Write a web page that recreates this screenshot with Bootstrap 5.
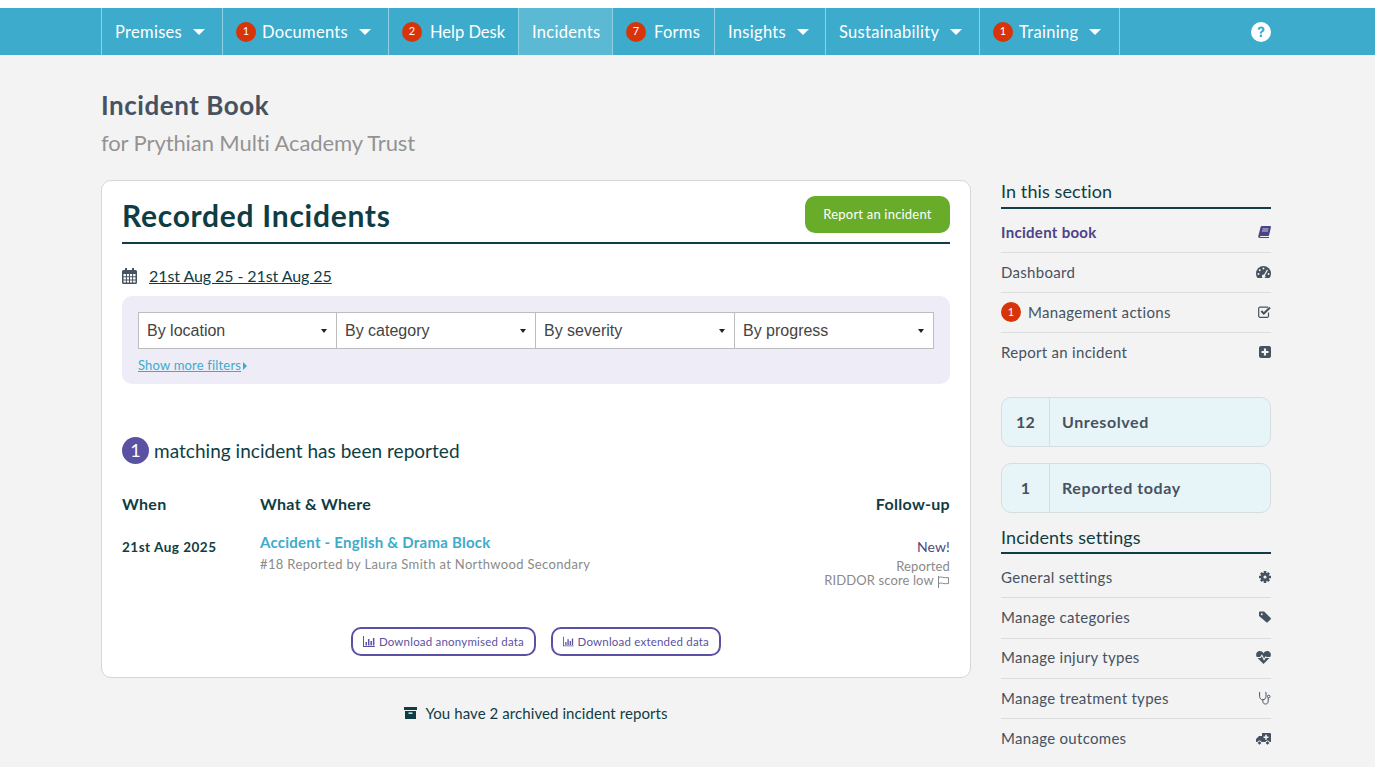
<!DOCTYPE html>
<html lang="en">
<head>
<meta charset="utf-8">
<title>Incident Book</title>
<link href="https://cdn.jsdelivr.net/npm/bootstrap@5.3.0/dist/css/bootstrap.min.css" rel="stylesheet">
<style>
html,body{overflow:hidden;height:767px}
body{background:#f3f3f3;font-family:"Lato","Noto Sans",sans-serif;color:#0f3d44;padding-top:8px;border-top:0}
.topline{position:absolute;left:0;right:0;top:0;height:8px;background:#fff}
.topbar{background:#3dabcb;height:47px;padding-left:101px;padding-right:104px;border-bottom:0}
.topitem{height:47px;padding:2px 0 0 13px;color:#fff;font-size:16.5px;letter-spacing:.3px;border-right:1px solid #8fd0e2;text-decoration:none;gap:6px;flex:none}
.topitem:first-child{border-left:1px solid #8fd0e2;width:122px}
.topitem:nth-child(2){width:166px}
.topitem:nth-child(3){width:130px;gap:8px;letter-spacing:0}
.topitem:nth-child(4){width:94px}
.topitem:nth-child(5){width:102px;gap:8px}
.topitem:nth-child(6){width:111px}
.topitem:nth-child(7){width:154px}
.topitem:nth-child(8){width:140px}
.topitem.on{background:#5cb9d4}
.tcaret{width:0;height:0;border-left:6px solid transparent;border-right:6px solid transparent;border-top:6px solid #fff;margin:-2px 0 0 5px}
.redcount{width:20px;height:20px;border-radius:50%;background:#d8340a;color:#fff;font-size:11px;letter-spacing:0;display:inline-flex;align-items:center;justify-content:center;flex:none}
.topitem .redcount{margin-top:-2px}
.helpdot{margin-left:auto}
.pagehead{padding:35px 0 0 101px;height:125px}
.booktitle{font-size:26px;font-weight:700;color:#465260;line-height:31px;margin:0;letter-spacing:.55px}
.booksub{font-size:22px;color:#939393;line-height:30px;margin:7px 0 0;letter-spacing:-.1px}
.layout{padding-left:101px;width:1271px;gap:30px}
.maincol{width:870px;flex:none}
.sidecol{width:270px;flex:none}
.incard{background:#fff;border:1px solid #d6d6d6;border-radius:10px;height:498px;padding:15px 20px 0}
.cardhead{height:48px;border-bottom:2px solid #0f3d44}
.cardtitle{font-size:30px;font-weight:700;color:#0f3d44;margin:0;line-height:38px;letter-spacing:.72px}
.greenbtn{background:#68ac2a;color:#fff;border:0;border-radius:10px;font-size:13px;height:37px;width:145px;padding:0;letter-spacing:.2px}
.daterow{margin-top:21px;height:22px;gap:12px;font-size:16px;line-height:22px;letter-spacing:-.08px}
.daterow a{color:#0f3d44}
.filterbox{background:#edecf7;border-radius:10px;margin-top:9px;height:88px;padding:16px}
.filterbar{height:37px;background:#fff;border-top:1px solid #bdbdbd;border-bottom:1px solid #bdbdbd}
.filtercell{flex:0 0 25%;font-family:"Liberation Sans",Arial,sans-serif;color:#444;font-size:16px;padding:0 8px;border-right:1px solid #bdbdbd}
.filtercell:first-child{border-left:1px solid #bdbdbd}
.minicaret{width:0;height:0;border-left:3px solid transparent;border-right:3px solid transparent;border-top:4px solid #222;margin-right:1px}
.morefilters{font-size:13px;color:#3dabcb;margin-top:8px;line-height:16px;letter-spacing:.18px}
.morefilters a{color:#3dabcb}
.rightcaret{display:inline-block;width:0;height:0;border-top:4px solid transparent;border-bottom:4px solid transparent;border-left:4px solid #3dabcb;margin-left:2px}
.matchline{margin-top:53px;font-size:19px;line-height:27px;gap:5px;letter-spacing:.03px}
.purplecount{width:27px;height:27px;border-radius:50%;background:#5b51a2;color:#fff;font-size:18px;display:inline-flex;align-items:center;justify-content:center;letter-spacing:0}
.colheads{margin-top:30px;font-size:16px;font-weight:700;line-height:20px;letter-spacing:.3px}
.whencol{width:138px;flex:none}
.rowdata{margin-top:13px;height:76px}
.whendata{font-size:13.5px;font-weight:700;padding-top:11px;line-height:18px;letter-spacing:.5px}
.inclink{color:#3dabcb;font-weight:700;font-size:15px;line-height:20px;text-decoration:none;letter-spacing:.24px;display:block;margin-top:5px}
.incmeta{color:#8a8a8a;font-size:13px;line-height:18px;margin-top:3px;letter-spacing:.35px}
.followcol{margin-left:auto;text-align:right;color:#8a8a8a;font-size:13px;line-height:14px;letter-spacing:.12px}
.newtag{color:#4d4a7e;font-size:14px;line-height:20px;margin-top:10px;margin-bottom:2px;display:block}
.dlrow{gap:15px;margin-top:24px}
.dlbtn{border:2px solid #5b51a2;border-radius:10px;background:#fff;color:#5b51a2;font-size:11.5px;height:29px;padding:0 10px;gap:4px;letter-spacing:.2px;white-space:nowrap}
.dlbtn.dlwide{width:185px}
.dlbtn.dlnarrow{width:170px}
.archline{height:70px;gap:8px;font-size:15px;letter-spacing:.08px;color:#0f3d44}
.sidehead{font-size:18px;line-height:22px;color:#0f3d44;border-bottom:2px solid #0f3d44;height:29px;letter-spacing:.1px;margin-bottom:4px}
.sideitem{height:40px;padding-bottom:1.5px;border-bottom:1px solid #dcdcdc;font-size:15px;color:#465260;letter-spacing:.3px;text-decoration:none}
.settingslist .sideitem{height:40.3px}
.sideitem.last{border-bottom:0}
.sideitem.cur{font-weight:700;color:#4b4486}
.sideicon{margin-left:auto;flex:none}
.sidered{width:20px;height:20px;font-size:11px;margin-right:7px}
.statbox{background:#e8f5f8;border:1px solid #d6dedf;border-radius:10px;height:50px;font-size:16px;font-weight:700;color:#465260;letter-spacing:.6px}
.statbox.firststat{margin-top:24px}
.statbox.nextstat{margin-top:16px}
.settingshead{margin-top:12px;line-height:24px}
.statnum{width:48px;border-right:1px solid #d6dedf;text-align:center;flex:none;line-height:48px;letter-spacing:.2px}
.statlabel{padding-left:12px;line-height:48px}
</style>
</head>
<body>
<div class="topline"></div>
<nav class="topbar d-flex align-items-center">
 <a class="topitem d-flex align-items-center" href="#">Premises<span class="tcaret"></span></a>
 <a class="topitem d-flex align-items-center" href="#"><span class="redcount">1</span>Documents<span class="tcaret"></span></a>
 <a class="topitem d-flex align-items-center" href="#"><span class="redcount">2</span>Help Desk</a>
 <a class="topitem on d-flex align-items-center" href="#">Incidents</a>
 <a class="topitem d-flex align-items-center" href="#"><span class="redcount">7</span>Forms</a>
 <a class="topitem d-flex align-items-center" href="#">Insights<span class="tcaret"></span></a>
 <a class="topitem d-flex align-items-center" href="#">Sustainability<span class="tcaret"></span></a>
 <a class="topitem d-flex align-items-center" href="#"><span class="redcount">1</span>Training<span class="tcaret"></span></a>
 <a class="helpdot d-flex" href="#" aria-label="Help">
  <svg width="20" height="20" viewBox="0 0 20 20"><circle cx="10" cy="10" r="10" fill="#fff"/><path d="M6.600 7.600C6.800 5.600 8.200 4.600 10.100 4.600c2 0 3.400 1.200 3.400 2.900 0 1.400-.8 2-1.700 2.600-.7.500-.9.800-.9 1.500H8.800c0-1.300.4-2 1.300-2.600.8-.5 1.200-.8 1.200-1.400 0-.6-.5-1-1.200-1-.8 0-1.300.4-1.400 1.200z" fill="#3dabcb"/><rect x="8.800" y="12.600" width="2.200" height="2.400" rx=".5" fill="#3dabcb"/></svg>
 </a>
</nav>
<header class="pagehead">
 <h1 class="booktitle">Incident Book</h1>
 <p class="booksub">for Prythian Multi Academy Trust</p>
</header>
<div class="layout d-flex align-items-start">
 <main class="maincol">
  <section class="incard">
   <div class="cardhead d-flex justify-content-between align-items-start">
    <h2 class="cardtitle">Recorded Incidents</h2>
    <button class="greenbtn" type="button">Report an incident</button>
   </div>
   <div class="daterow d-flex align-items-center">
    <svg width="15" height="16" viewBox="0 0 15 16"><path fill="#465260" d="M3 0h2v2h5V0h2v2h1.500A1.500 1.500 0 0 1 15 3.500v11a1.500 1.500 0 0 1-1.500 1.500h-12A1.500 1.500 0 0 1 0 14.500v-11A1.500 1.500 0 0 1 1.500 2H3z"/><path fill="#fff" d="M1.500 6h2.400v2.200H1.500zm3.400 0h2.100v2.200H4.900zm3.100 0h2.100v2.200H8zm3.100 0h2.400v2.200h-2.400zM1.500 9.200h2.400v2.200H1.500zm3.400 0h2.100v2.200H4.900zm3.100 0h2.100v2.200H8zm3.100 0h2.400v2.200h-2.400zM1.500 12.400h2.400v2.100H1.500zm3.400 0h2.100v2.100H4.900zm3.100 0h2.100v2.100H8zm3.100 0h2.400v2.100h-2.400z"/></svg>
    <a href="#">21st Aug 25 - 21st Aug 25</a>
   </div>
   <div class="filterbox">
    <div class="filterbar d-flex">
     <div class="filtercell d-flex align-items-center justify-content-between">By location<span class="minicaret"></span></div>
     <div class="filtercell d-flex align-items-center justify-content-between">By category<span class="minicaret"></span></div>
     <div class="filtercell d-flex align-items-center justify-content-between">By severity<span class="minicaret"></span></div>
     <div class="filtercell d-flex align-items-center justify-content-between">By progress<span class="minicaret"></span></div>
    </div>
    <div class="morefilters"><a href="#">Show more filters</a><span class="rightcaret"></span></div>
   </div>
   <div class="matchline d-flex align-items-center"><span class="purplecount">1</span>matching incident has been reported</div>
   <div class="colheads d-flex"><div class="whencol">When</div><div>What &amp; Where</div><div class="ms-auto">Follow-up</div></div>
   <div class="rowdata d-flex">
    <div class="whencol whendata">21st Aug 2025</div>
    <div><a class="inclink" href="#">Accident - English &amp; Drama Block</a><div class="incmeta">#18 Reported by Laura Smith at Northwood Secondary</div></div>
    <div class="followcol"><span class="newtag">New!</span>Reported<br>RIDDOR score low <svg width="13" height="12" viewBox="0 0 13 12"><path fill="none" stroke="#8a8a8a" d="M1.500 0v12M1.500 1.500c3-1.500 5 1 10 0v6c-5 1-7-1.500-10 0"/></svg></div>
   </div>
   <div class="dlrow d-flex justify-content-center">
    <button class="dlbtn dlwide d-flex align-items-center" type="button"><svg width="12" height="11" viewBox="0 0 12 11"><path fill="#5b51a2" d="M0 0h1v10h11v1H0zM2.500 6h1.500v3.500H2.500zM5 3h1.500v6.500H5zM7.500 5H9v4.500H7.500zM10 2h1.500v7.500H10z"/></svg>Download anonymised data</button>
    <button class="dlbtn dlnarrow d-flex align-items-center" type="button"><svg width="12" height="11" viewBox="0 0 12 11"><path fill="#5b51a2" d="M0 0h1v10h11v1H0zM2.500 6h1.500v3.500H2.500zM5 3h1.500v6.500H5zM7.500 5H9v4.500H7.500zM10 2h1.500v7.500H10z"/></svg>Download extended data</button>
   </div>
  </section>
  <div class="archline d-flex align-items-center justify-content-center">
   <svg width="13" height="12" viewBox="0 0 13 12"><path fill="#0f3d44" d="M0 0h13v3H0zM1 4h11v8H1z"/><rect x="4.500" y="5.500" width="4" height="1.300" fill="#fff"/></svg>
   <span>You have 2 archived incident reports</span>
  </div>
 </main>
 <aside class="sidecol">
  <div class="sidehead">In this section</div>
  <a class="sideitem cur d-flex align-items-center" href="#">Incident book<svg class="sideicon" width="13" height="12" viewBox="0 0 13 12"><path fill="#4b4486" d="M4 0h8a1 1 0 0 1 1 1l-2 8.500a1 1 0 0 1-.7.500H2.500c-.8 0-.8 1 0 1H11v1H2C.5 12 0 11 .3 10L2.600 1A1.500 1.500 0 0 1 4 0z"/><path stroke="#edecf7" stroke-width=".8" d="M4.500 3h6M4 5h6"/></svg></a>
  <a class="sideitem d-flex align-items-center" href="#">Dashboard<svg class="sideicon" width="15" height="12" viewBox="0 0 14 11.200"><path fill="#465260" d="M7 0a7 7 0 0 1 7 7c0 1.600-.5 3-1.500 4.200h-11C.5 10 0 8.600 0 7a7 7 0 0 1 7-7z"/><g fill="#f3f3f3"><circle cx="7" cy="2.400" r=".9"/><circle cx="3.500" cy="4" r=".9"/><circle cx="2.300" cy="7.500" r=".9"/><circle cx="11.700" cy="7.500" r=".9"/><path d="M10.200 3.300l1 .6L8.400 8.700a1.600 1.600 0 1 1-1-.6z"/></g></svg></a>
  <a class="sideitem d-flex align-items-center" href="#"><span class="redcount sidered">1</span>Management actions<svg class="sideicon" width="13" height="12" viewBox="0 0 13 12"><path fill="none" stroke="#465260" stroke-width="1.200" d="M10.500 6.500V10a1.300 1.300 0 0 1-1.300 1.300H2A1.300 1.300 0 0 1 .7 10V2.500A1.300 1.300 0 0 1 2 1.200h8"/><path fill="none" stroke="#465260" stroke-width="2" d="M3.300 5l2.500 2.500L12 1.500"/></svg></a>
  <a class="sideitem last d-flex align-items-center" href="#">Report an incident<svg class="sideicon" width="12" height="12" viewBox="0 0 12 12"><rect width="12" height="12" rx="2" fill="#465260"/><path stroke="#f3f3f3" stroke-width="2.200" d="M6 2.500v7M2.500 6h7"/></svg></a>
  <div class="statbox firststat d-flex"><div class="statnum">12</div><div class="statlabel">Unresolved</div></div>
  <div class="statbox nextstat d-flex"><div class="statnum">1</div><div class="statlabel">Reported today</div></div>
  <div class="settingslist">
  <div class="sidehead settingshead">Incidents settings</div>
  <a class="sideitem d-flex align-items-center" href="#">General settings<svg class="sideicon" width="12" height="12" viewBox="0 0 12 12"><path stroke="#465260" stroke-width="2.600" d="M6 0v12M0 6h12M1.900 1.900l8.200 8.200M10.100 1.900l-8.200 8.200"/><circle cx="6" cy="6" r="4.300" fill="#465260"/><circle cx="6" cy="6" r="1.600" fill="#f3f3f3"/></svg></a>
  <a class="sideitem d-flex align-items-center" href="#">Manage categories<svg class="sideicon" width="12" height="12" viewBox="0 0 13 12"><path fill="#465260" d="M0 1a1 1 0 0 1 1-1h4.500L12.700 7a1 1 0 0 1 0 1.400l-3.300 3.300a1 1 0 0 1-1.400 0L0 5z"/><circle cx="3" cy="3" r="1" fill="#f3f3f3"/></svg></a>
  <a class="sideitem d-flex align-items-center" href="#">Manage injury types<svg class="sideicon" width="15" height="13" viewBox="0 0 14 12"><path fill="#465260" d="M7 12L1 6C-1 3.500.5 0 3.500 0 5 0 6.200.8 7 2 7.800.8 9 0 10.500 0 13.500 0 15 3.500 13 6z"/><path fill="none" stroke="#f3f3f3" stroke-width="1" d="M0 6h4l1.500-2L7.500 8 9 5.500 10 6h4"/></svg></a>
  <a class="sideitem d-flex align-items-center" href="#">Manage treatment types<svg class="sideicon" width="12" height="14" viewBox="0 0 12 13"><path fill="none" stroke="#465260" stroke-width="1" d="M1 .8H.6v4c0 2 1.400 3.500 3.200 3.500S7 6.800 7 4.800v-4h-.5M3.800 8.300v1.500c0 1.500 1 2.700 2.700 2.700s2.700-1.200 2.700-2.700V6.500"/><circle cx="9.700" cy="5" r="1.300" fill="none" stroke="#465260"/></svg></a>
  <a class="sideitem last d-flex align-items-center" href="#">Manage outcomes<svg class="sideicon" width="15" height="12" viewBox="0 0 15 12"><path fill="#465260" d="M6 0h8a1 1 0 0 1 1 1v8H0V6l3-3h3V1z"/><path stroke="#f3f3f3" stroke-width="1.600" d="M10 1.800v5M7.500 4.300h5"/><circle cx="3.500" cy="10" r="2" fill="#465260" stroke="#f3f3f3"/><circle cx="11.500" cy="10" r="2" fill="#465260" stroke="#f3f3f3"/></svg></a>
  </div>
 </aside>
</div>
<script src="https://cdn.jsdelivr.net/npm/bootstrap@5.3.0/dist/js/bootstrap.bundle.min.js"></script>
</body>
</html>
